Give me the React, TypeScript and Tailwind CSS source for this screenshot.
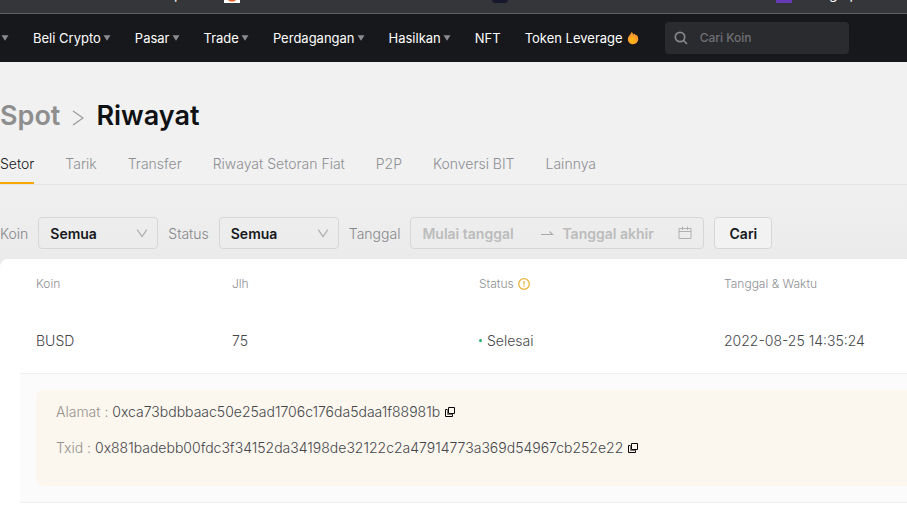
import { useState } from "react";

type NavItem = {
  label: string;
  hasMenu?: boolean;
  hot?: boolean;
};

const NAV_ITEMS: NavItem[] = [
  { label: "Beli Crypto", hasMenu: true },
  { label: "Pasar", hasMenu: true },
  { label: "Trade", hasMenu: true },
  { label: "Perdagangan", hasMenu: true },
  { label: "Hasilkan", hasMenu: true },
  { label: "NFT" },
  { label: "Token Leverage", hot: true },
];

const TABS = ["Setor", "Tarik", "Transfer", "Riwayat Setoran Fiat", "P2P", "Konversi BIT", "Lainnya"];

const DETAILS = [
  { label: "Alamat", value: "0xca73bdbbaac50e25ad1706c176da5daa1f88981b" },
  { label: "Txid", value: "0x881badebb00fdc3f34152da34198de32122c2a47914773a369d54967cb252e22" },
];

const Caret = () => (
  <svg viewBox="0 0 8 6" className="h-[6px] w-2 shrink-0" aria-hidden="true">
    <path d="M0.5 0.3h7L4 5.8z" fill="#8a8c91" />
  </svg>
);

const Flame = () => (
  <svg viewBox="0 0 12 14" className="h-[14px] w-3 shrink-0" aria-hidden="true">
    <path
      d="M4.6 0.8C5.6 1.8 6.1 2.6 6.4 3.6C7 3.4 7.3 3 7.5 2.4C8.1 3 8.4 3.6 8.8 4.2L9.8 3.9C10.8 5.2 11.2 6.5 11.2 8C11.2 11 9 13.2 6 13.2S0.9 11 0.9 8.2C0.9 6.6 1.5 5.4 2.6 4.2C3.7 3 4.5 2.2 4.6 0.8Z"
      fill="#ff9c2e"
    />
    <path d="M5 5C6.5 6 8.5 7 8.7 9.4C8.8 11.4 7.6 12.6 6 12.7C4 12.7 2.4 11.6 2.2 9.4C2 7.4 4.8 7 5 5Z" fill="#ffb11a" />
  </svg>
);

const ChevronDown = () => (
  <svg
    viewBox="0 0 12 12"
    className="pointer-events-none absolute top-[10px] right-[10px] size-3"
    fill="none"
    stroke="#b0b0b0"
    strokeWidth="1.2"
    aria-hidden="true"
  >
    <path d="M1.2 2.7L6 9.7L10.8 2.7" />
  </svg>
);

const CalendarIcon = () => (
  <svg viewBox="0 0 14 14" className="size-[14px] shrink-0" fill="none" stroke="#b0b0b0" aria-hidden="true">
    <path d="M1 2.5H13V12.5H1ZM1 5.5H13M4.5 0.5V4M9.5 0.5V4" />
  </svg>
);

const CopyIcon = () => (
  <svg viewBox="0 0 10 10" className="size-[10px]" fill="none" stroke="#050506" aria-hidden="true">
    <path d="M2.5 3V7.5H8" stroke="#77736e" />
    <path d="M3.5 0.5H9.5V6.5H3.5Z" />
    <path d="M2.5 2.5H0.5V9.5H7.5V7.5" />
  </svg>
);

const BrowserStrip = () => (
  <div className="flex h-[14px] items-start overflow-hidden border-b border-[#5d5f63] bg-[#35363a] text-sm text-white">
    <span className="-mt-4 ml-[174px] w-[50px] leading-5">p</span>
    <svg viewBox="0 0 16 3" className="h-[3px] w-4" aria-hidden="true">
      <path fill="#fff" d="M0 0H16V3H0Z" />
      <path fill="#e8622c" d="M4 0H12C10.5 2.3 5.5 2.3 4 0Z" />
    </svg>
    <span className="ml-[252px] h-[3px] w-4 rounded-b bg-[#17182b]" />
    <span className="ml-[268px] h-[3px] w-4 bg-[#673ab7]" />
    <span className="-mt-4 ml-[37px] flex gap-3 leading-5">
      <span>g</span>
      <span>p</span>
    </span>
  </div>
);

const Navbar = () => (
  <nav className="flex h-12 items-center gap-6 bg-[#17181c] pl-px text-[13px] leading-5 text-white">
    <button type="button" aria-label="Menu">
      <Caret />
    </button>
    {NAV_ITEMS.map((item) => (
      <a key={item.label} href="#" className="flex items-center gap-[2px] whitespace-nowrap">
        {item.label}
        {item.hasMenu && <Caret />}
        {item.hot && (
          <span className="ml-[2px]">
            <Flame />
          </span>
        )}
      </a>
    ))}
    <label className="ml-[2px] flex h-8 w-[184px] shrink-0 items-center gap-3 rounded bg-[#2a2b2f] px-[9px]">
      <svg viewBox="0 0 14 14" className="size-[14px] shrink-0" fill="none" stroke="#85868a" strokeWidth="1.7" aria-hidden="true">
        <circle cx="6" cy="6" r="4.7" />
        <path d="M9.4 9.4L13 13" />
      </svg>
      <input
        type="text"
        aria-label="Cari Koin"
        placeholder="Cari Koin"
        className="w-full min-w-0 bg-transparent text-[12px] font-medium text-white outline-none placeholder:text-[#6f7074]"
      />
    </label>
  </nav>
);

const FilterSelect = ({ id, label }: { id: string; label: string }) => (
  <>
    <label htmlFor={id}>{label}</label>
    <span className="relative">
      <select
        id={id}
        className="block h-8 w-[120px] appearance-none rounded border border-[#d6d6d6] bg-transparent px-[11px] font-semibold text-[#16171b]"
      >
        <option>Semua</option>
      </select>
      <ChevronDown />
    </span>
  </>
);

const Filters = () => (
  <form className="mt-8 flex items-center gap-[10px] text-[14px] font-light text-[#85868a]">
    <FilterSelect id="coin" label="Koin" />
    <FilterSelect id="status" label="Status" />
    <label htmlFor="start-date">Tanggal</label>
    <div className="flex h-8 w-[294px] items-center rounded border border-[#d6d6d6] px-[11px] font-semibold">
      <input
        id="start-date"
        type="text"
        placeholder="Mulai tanggal"
        className="w-[118px] bg-transparent outline-none placeholder:text-[#bcbcbc]"
      />
      <svg viewBox="0 0 14 14" className="mr-2 size-[14px] shrink-0" fill="none" stroke="#a9a9a9" strokeWidth="1.2" aria-hidden="true">
        <path d="M1 8.5H12.5L9.5 5.5" />
      </svg>
      <input
        type="text"
        aria-label="Tanggal akhir"
        placeholder="Tanggal akhir"
        className="w-0 flex-1 bg-transparent outline-none placeholder:text-[#bcbcbc]"
      />
      <CalendarIcon />
    </div>
    <button type="button" className="h-8 w-[58px] rounded border border-[#d6d6d6] bg-[#f2f2f2] font-semibold text-[#16171b]">
      Cari
    </button>
  </form>
);

const HistoryTable = () => (
  <div className="mt-[10px] rounded-tl-lg bg-white pl-5">
    <table className="w-full table-fixed text-left text-[14px] font-light text-[#45464a]">
      <colgroup>
        <col className="w-[196px]" />
        <col className="w-[247px]" />
        <col className="w-[245px]" />
        <col />
      </colgroup>
      <thead>
        <tr className="h-[50px] text-[12px] text-[#8e8f93]">
          <th className="pl-4 font-light">Koin</th>
          <th className="pl-4 font-light">Jlh</th>
          <th className="pl-4 font-light">
            <span className="flex items-center gap-1">
              Status
              <svg viewBox="0 0 12 12" className="size-3" fill="none" stroke="#e9b53c" strokeWidth="1.3" aria-hidden="true">
                <circle cx="6" cy="6" r="5.3" />
                <path d="M6 3V6.8M6 7.8V9" />
              </svg>
            </span>
          </th>
          <th className="pl-4 font-light">Tanggal &amp; Waktu</th>
        </tr>
      </thead>
      <tbody>
        <tr className="h-16 border-b border-[#eeeeee]">
          <td className="pl-4">BUSD</td>
          <td className="pl-4">75</td>
          <td className="pl-4">
            <span className="flex items-center gap-[5px]">
              <span className="size-[3px] rounded-full bg-[#20b26c]" />
              Selesai
            </span>
          </td>
          <td className="pl-4">2022-08-25 14:35:24</td>
        </tr>
        <tr className="border-b border-[#eeeeee] bg-[#fbfbfb]">
          <td colSpan={4} className="py-4 pl-4">
            <div className="flex h-24 flex-col gap-4 rounded-l-lg bg-[#fbf6ee] py-3 pl-5">
              {DETAILS.map((detail) => (
                <div key={detail.label} className="flex h-5 items-center whitespace-nowrap">
                  <span className="text-[#95928d]">{detail.label} :&nbsp;</span>
                  <span>{detail.value}</span>
                  <button type="button" aria-label={`Salin ${detail.label}`} className="ml-[5px]">
                    <CopyIcon />
                  </button>
                </div>
              ))}
            </div>
          </td>
        </tr>
      </tbody>
    </table>
  </div>
);

export default function App() {
  const [activeTab, setActiveTab] = useState("Setor");

  return (
    <div className="min-h-screen overflow-hidden bg-white font-['Inter',sans-serif]">
      <BrowserStrip />
      <Navbar />
      <main className="bg-linear-to-b from-[#f1f1f1] from-25% to-[#d9d9d9] pt-9">
        <h1 className="flex h-9 items-center gap-3 text-[27px] font-semibold text-[#101114]">
          <a href="#" className="text-[#8e8e8e]">
            Spot
          </a>
          <svg viewBox="0 0 12 16" className="mt-1 h-4 w-3" fill="none" stroke="#9a9a9a" strokeWidth="1.2" aria-hidden="true">
            <path d="M1 1L11 8L1 15" />
          </svg>
          Riwayat
        </h1>
        <div role="tablist" className="mt-2 flex h-[43px] gap-[31px] border-b border-[#e4e4e4] text-[14px] font-light">
          {TABS.map((tab) => (
            <button
              key={tab}
              type="button"
              role="tab"
              aria-selected={tab === activeTab}
              onClick={() => setActiveTab(tab)}
              className={
                tab === activeTab
                  ? "whitespace-nowrap border-b-2 border-[#f7a600] pt-[2px] text-[#16171b]"
                  : "whitespace-nowrap border-b-2 border-transparent pt-[2px] text-[#8e8f93]"
              }
            >
              {tab}
            </button>
          ))}
        </div>
        <Filters />
        <HistoryTable />
      </main>
    </div>
  );
}
